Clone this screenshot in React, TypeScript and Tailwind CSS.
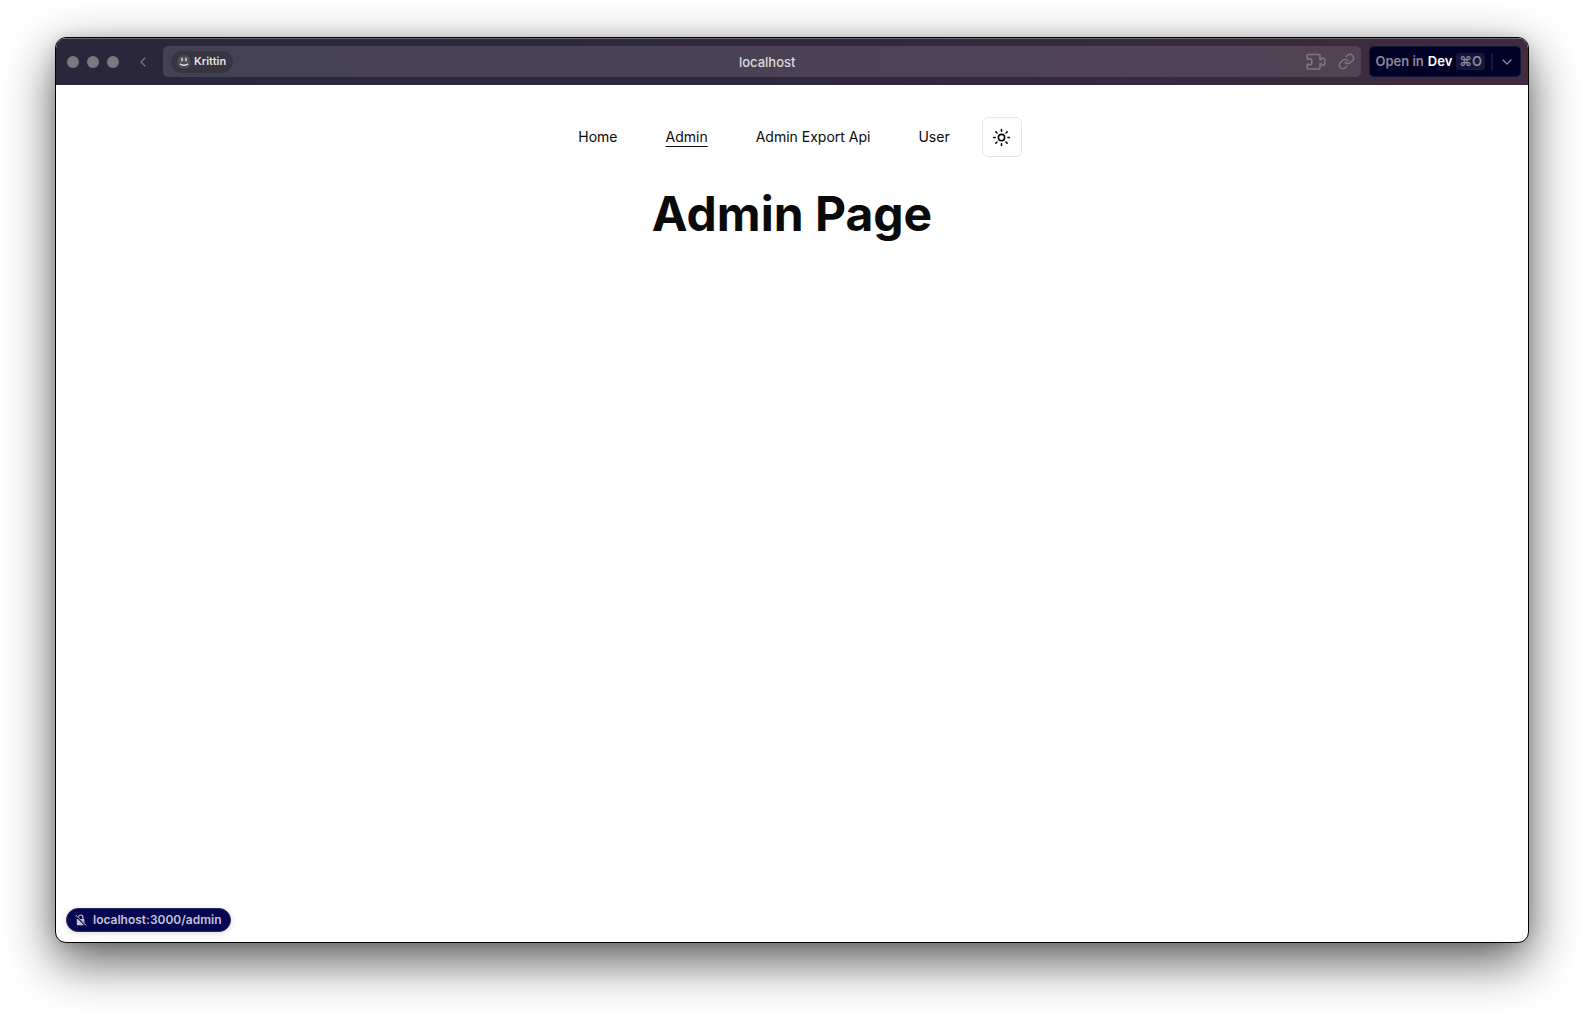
import { ChevronDown, ChevronLeft, Link as LinkIcon, Sun } from "lucide-react";

const links = [
  { label: "Home", href: "#home" },
  { label: "Admin", href: "#admin", active: true },
  { label: "Admin Export Api", href: "#admin-export-api" },
  { label: "User", href: "#user" },
];

function SmileIcon() {
  return (
    <span className="flex size-3.5 items-center justify-center rounded-full bg-[#4d4b54]">
      <svg viewBox="0 0 14 14" className="size-3.5" fill="none" stroke="#e8e8ea" strokeWidth="1.4">
        <path d="M5 2.800v3.400M9 2.800v3.400M3 8.800c1.800 1.900 6.200 1.900 8 0" />
      </svg>
    </span>
  );
}

function PuzzleIcon() {
  return (
    <svg viewBox="0 0 20 18" className="h-[18px] w-5" fill="none" stroke="currentColor" strokeWidth="1.6" strokeLinejoin="round">
      <path d="M2.200 1.500H13a1 1 0 0 1 1 1v4.300h1.200a1.800 1.800 0 0 1 3.600.3v3.300a1.800 1.800 0 0 1-3.600.3H14v4.300a1 1 0 0 1-1 1H2.200a1 1 0 0 1-1-1v-3.600h1.500a1.800 1.800 0 0 0 3 -.9V7.200a1.800 1.800 0 0 0-3-.9H1.200V2.500a1 1 0 0 1 1-1Z" />
    </svg>
  );
}

function UnlockedIcon() {
  return (
    <svg viewBox="0 0 12 12" className="size-3" fill="none">
      <path d="M1.800 5h1L9 11.200H2.600a.8.800 0 0 1-.8-.8ZM5.400 5h3.200a.8.800 0 0 1 .8.800V9.100Z" fill="currentColor" />
      <path d="M3.600 2.600C4 1.500 4.800 1 5.700 1c1.300 0 2.200.9 2.200 2.400V5.400" stroke="currentColor" strokeWidth="1.200" />
      <path d="M1 1.200 10.900 11.200" stroke="currentColor" strokeWidth="1" strokeLinecap="round" />
    </svg>
  );
}

function TitleBar() {
  return (
    <header className="flex h-[47px] shrink-0 items-center bg-linear-to-r from-[#29273c] via-[#30283d] to-[#402b3f] pr-[7px] pl-[11px] shadow-[inset_0_1px_0_#6c6a76]">
      <div className="flex gap-2">
        <span className="size-3 rounded-full bg-[#7a7981]" />
        <span className="size-3 rounded-full bg-[#7a7981]" />
        <span className="size-3 rounded-full bg-[#7a7981]" />
      </div>
      <button aria-label="Back" className="mr-3 ml-4 flex size-4 items-center justify-center text-[#77757f]">
        <ChevronLeft size={16} strokeWidth={2} className="shrink-0" />
      </button>
      <div className="grid h-[31px] grow grid-cols-[1fr_auto_1fr] items-center rounded-[5px] bg-linear-to-r from-[#434153] via-[#4a4254] to-[#524354] pr-1.5 pl-2">
        <button className="flex h-[22px] items-center gap-[3px] justify-self-start rounded-full bg-[#363541] pr-[7px] pl-1.5 text-[11px] font-semibold text-[#e4e3e6]">
          <SmileIcon />
          Krittin
        </button>
        <span className="pt-0.5 pl-2 text-[13px] font-medium text-[#dcdadf]">localhost</span>
        <div className="flex items-center gap-3 justify-self-end text-[#83757f]">
          <button aria-label="Extensions">
            <PuzzleIcon />
          </button>
          <button aria-label="Copy link">
            <LinkIcon size={17} strokeWidth={2} />
          </button>
        </div>
      </div>
      <div className="ml-2 flex h-[31px] items-center rounded-[5px] border border-[#14163a] bg-[#020126] px-[5px] text-[13px] font-semibold text-[#8b8a99]">
        <button className="flex items-center gap-1">
          <span>Open in</span>
          <span className="text-white">Dev</span>
          <kbd className="flex h-[17px] items-center rounded-[3px] bg-[#15163a] px-[3px] font-[Inter] text-[13px]">⌘O</kbd>
        </button>
        <span className="mx-1.5 h-[18px] w-0.5 bg-[#15163a]" />
        <button aria-label="More options" className="flex w-4 justify-center">
          <ChevronDown size={16} strokeWidth={2} />
        </button>
      </div>
    </header>
  );
}

export default function App() {
  return (
    <div className="flex min-h-screen flex-col bg-white px-[55px] pt-[37px] pb-[73px] font-[Inter,sans-serif]">
      <div className="flex grow flex-col overflow-hidden rounded-[11px] border border-black bg-white shadow-[0_18px_50px_rgba(0,0,0,0.65),0_0_14px_rgba(0,0,0,0.12)]">
        <TitleBar />
        <main className="flex grow flex-col items-center pt-8 text-[#0a0a0a]">
          <nav className="flex items-center gap-4">
            {links.map((link) => (
              <a
                key={link.label}
                href={link.href}
                className={link.active ? "px-4 text-sm underline underline-offset-4" : "px-4 text-sm"}
              >
                {link.label}
              </a>
            ))}
            <button aria-label="Toggle theme" className="flex size-10 items-center justify-center rounded-md border border-[#e5e5e5]">
              <Sun size={19} strokeWidth={2} />
            </button>
          </nav>
          <h1 className="mt-8 text-5xl leading-[50px] font-bold">Admin Page</h1>
        </main>
        <footer className="flex px-2.5 pb-2.5">
          <div className="flex h-6 items-center gap-1.5 rounded-full border border-[#2b2c62] bg-[#060750] px-2 text-[12px] font-semibold text-[#c2c3d6] shadow-[0_1px_6px_rgba(0,0,0,0.15)]">
            <UnlockedIcon />
            localhost:3000/admin
          </div>
        </footer>
      </div>
    </div>
  );
}
